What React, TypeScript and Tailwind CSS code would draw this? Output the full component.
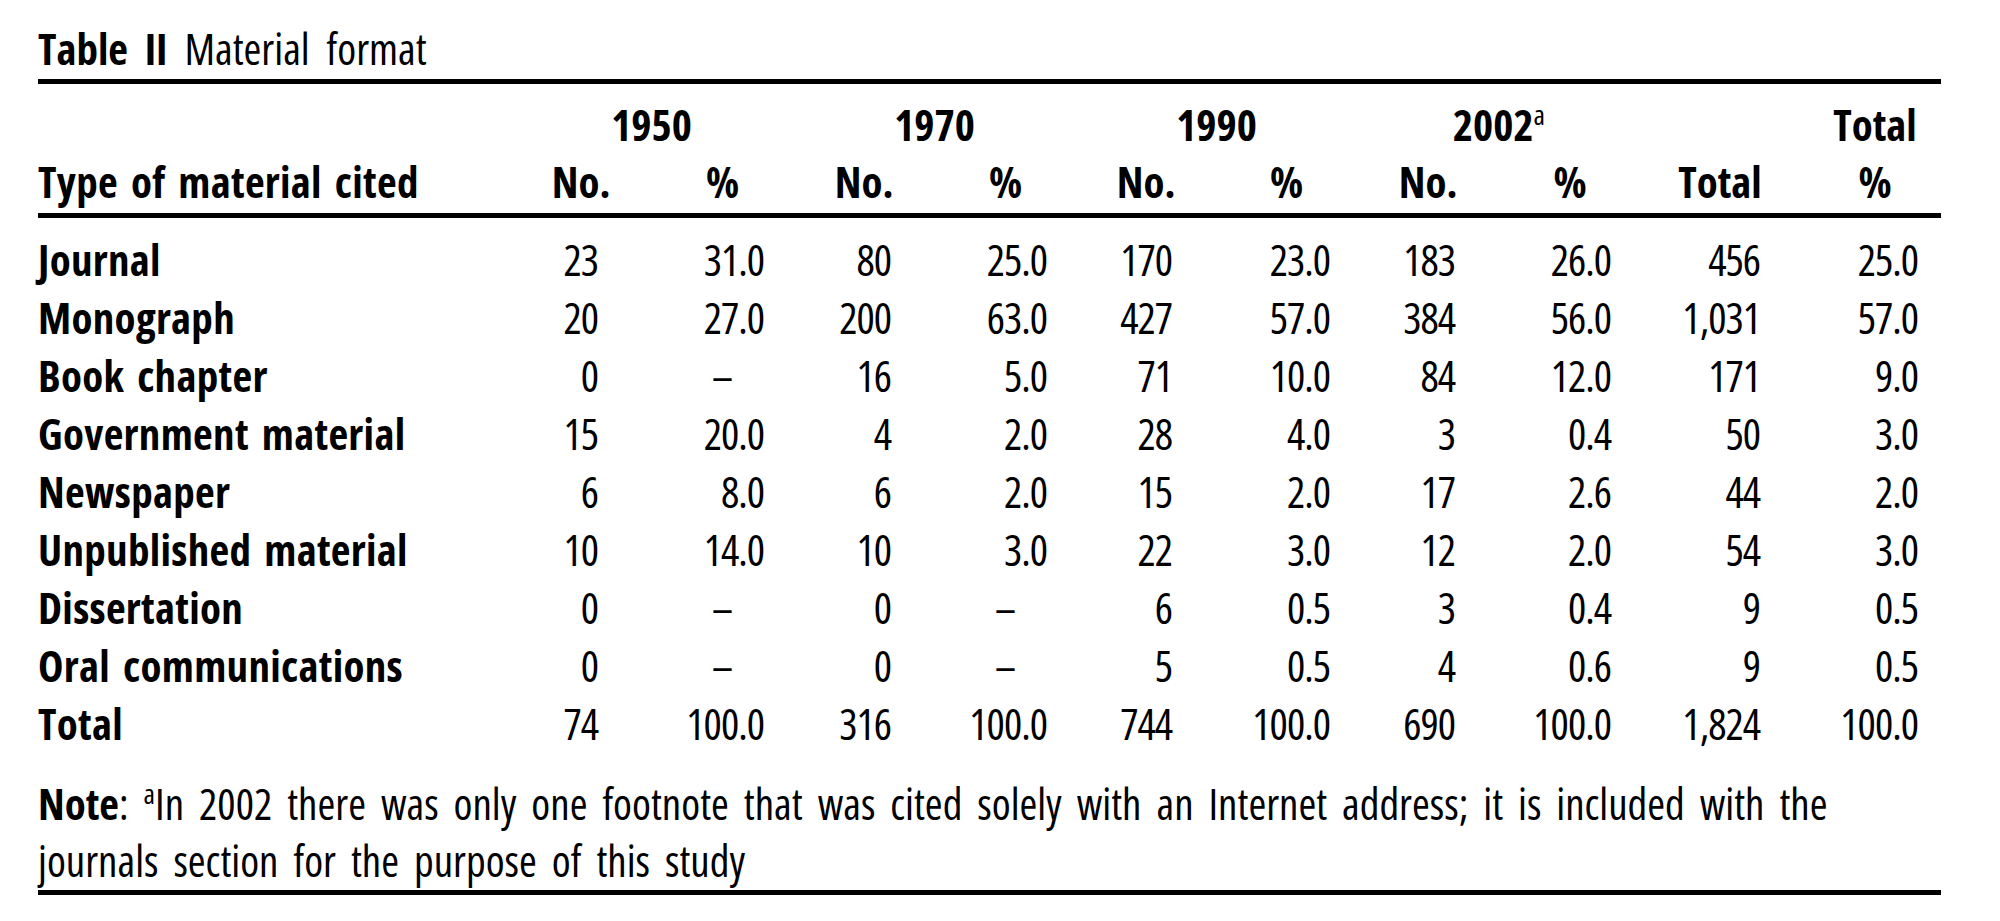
const cols = [
  "pr-[54px]",
  "pr-[29px]",
  "pr-[44px]",
  "pr-[29px]",
  "pr-[44px]",
  "pr-[27px]",
  "pr-[44px]",
  "pr-[30px]",
  "pr-[39px]",
  "pr-[23px]",
];

const rows: [string, string[]][] = [
  ["Journal", ["23", "31.0", "80", "25.0", "170", "23.0", "183", "26.0", "456", "25.0"]],
  ["Monograph", ["20", "27.0", "200", "63.0", "427", "57.0", "384", "56.0", "1,031", "57.0"]],
  ["Book chapter", ["0", "–", "16", "5.0", "71", "10.0", "84", "12.0", "171", "9.0"]],
  ["Government material", ["15", "20.0", "4", "2.0", "28", "4.0", "3", "0.4", "50", "3.0"]],
  ["Newspaper", ["6", "8.0", "6", "2.0", "15", "2.0", "17", "2.6", "44", "2.0"]],
  ["Unpublished material", ["10", "14.0", "10", "3.0", "22", "3.0", "12", "2.0", "54", "3.0"]],
  ["Dissertation", ["0", "–", "0", "–", "6", "0.5", "3", "0.4", "9", "0.5"]],
  ["Oral communications", ["0", "–", "0", "–", "5", "0.5", "4", "0.6", "9", "0.5"]],
  ["Total", ["74", "100.0", "316", "100.0", "744", "100.0", "690", "100.0", "1,824", "100.0"]],
];

const grid =
  "grid grid-cols-[472px_142px_141px_142px_141px_140px_141px_142px_142px_158px_142px]";

const App = () => {
  return (
    <div className="min-h-screen bg-white text-black font-['Open_Sans',sans-serif] font-stretch-[78%] text-[43px]">
      <div className="ml-[38px] w-[1903px] pt-[29px]">
        <div className="leading-[40px] [word-spacing:9px]">
          <span className="font-bold">Table II</span> Material format
        </div>
        <div className="mt-[10px] h-[5px] bg-black" />

        <div className={`${grid} mt-[12px] leading-[57px] font-bold`}>
          <div />
          <div className="col-span-2 text-center">1950</div>
          <div className="col-span-2 text-center">1970</div>
          <div className="col-span-2 text-center">1990</div>
          <div className="col-span-2 text-center">
            2002<sup className="text-[28px] font-normal -top-[16px]">a</sup>
          </div>
          <div />
          <div className="text-center pl-[10px]">Total</div>
        </div>
        <div className={`${grid} leading-[57px] font-bold`}>
          <div className="tracking-[0.3px] [word-spacing:5px]">Type of material cited</div>
          <div className="text-center">No.</div>
          <div className="text-center">%</div>
          <div className="text-center">No.</div>
          <div className="text-center">%</div>
          <div className="text-center">No.</div>
          <div className="text-center">%</div>
          <div className="text-center">No.</div>
          <div className="text-center">%</div>
          <div className="text-center">Total</div>
          <div className="text-center pl-[10px]">%</div>
        </div>
        <div className="mt-[3px] h-[5px] bg-black" />

        <div className="mt-[13px]">
          {rows.map(([label, vals]) => (
            <div key={label} className={`${grid} leading-[58px]`}>
              <div className="font-bold tracking-[0.3px] [word-spacing:5px]">{label}</div>
              {vals.map((v, i) =>
                v === "–" ? (
                  <div key={i} className="text-center">
                    –
                  </div>
                ) : (
                  <div
                    key={i}
                    className={`text-right font-stretch-[75%] tracking-[-1px] ${cols[i]}`}
                  >
                    {v}
                  </div>
                )
              )}
            </div>
          ))}
        </div>

        <div className="mt-[22px] leading-[57px] whitespace-nowrap [word-spacing:7px]">
          <span className="font-bold">Note</span>:{" "}
          <sup className="text-[28px] -top-[16px]">a</sup>In 2002 there was only one
          footnote that was cited solely with an Internet address; it is included with
          the
          <br />
          journals section for the purpose of this study
        </div>
        <div className="mt-[1px] h-[5px] bg-black" />
      </div>
    </div>
  );
};

export default App;
